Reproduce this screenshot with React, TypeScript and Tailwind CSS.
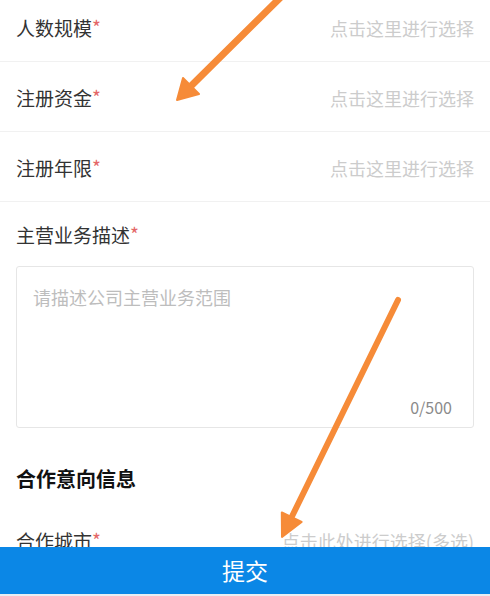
import React from "react";

const font = { fontFamily: '"Noto Sans CJK SC", "Noto Sans", sans-serif' };

function Label({ text }: { text: string }) {
  return (
    <div className="text-[19px] leading-[28px] text-[#333333]">
      <span>{text}</span>
      <span className="relative top-[-1px] text-[19px] text-[#e46767]">*</span>
    </div>
  );
}

function SelectRow({ label, placeholder }: { label: string; placeholder: string }) {
  return (
    <div className="flex h-[70px] items-center justify-between border-b border-[#f1f1f1] px-4 pt-[3px]">
      <Label text={label} />
      <div className="text-[18px] leading-[28px] text-[#cccccc]">{placeholder}</div>
    </div>
  );
}

export default function App() {
  return (
    <div className="relative h-[596px] w-[490px] overflow-hidden bg-white" style={font}>
      <div className="-mt-2 flex flex-col">
        <SelectRow label="人数规模" placeholder="点击这里进行选择" />
        <SelectRow label="注册资金" placeholder="点击这里进行选择" />
        <SelectRow label="注册年限" placeholder="点击这里进行选择" />

        <div className="flex flex-col px-4">
          <div className="mt-[19px]">
            <Label text="主营业务描述" />
          </div>
          <div className="mt-[17px] flex h-[162px] flex-col justify-between rounded-[3px] border border-[#e6e6e6] pb-[10px] pl-4 pr-[21px] pt-[18px]">
            <div className="text-[18px] leading-[24px] text-[#bdbdbd]">请描述公司主营业务范围</div>
            <div className="self-end text-[16px] leading-[20px] text-[#8a8a8a]">0/500</div>
          </div>
          <div className="mt-[37px] text-[20px] font-bold leading-[28px] text-[#111111]">合作意向信息</div>
        </div>

        <div className="mt-[12px]">
          <SelectRow label="合作城市" placeholder="点击此处进行选择(多选)" />
        </div>
      </div>

      <div className="absolute bottom-0 left-0 right-0 flex h-[49px] flex-col">
        <button className="flex h-[47px] w-full items-center justify-center bg-[#0b87e6] text-[23px] leading-none text-white">
          提交
        </button>
        <div className="h-[2px] bg-[#e9eef3]" />
      </div>

      <svg
        className="pointer-events-none absolute left-0 top-0"
        width="490"
        height="596"
        viewBox="0 0 490 596"
      >
        <line x1="284" y1="-6" x2="191" y2="86" stroke="#f68b38" strokeWidth="7" strokeLinecap="round" />
        <polygon points="177,100 183,78 199,94" fill="#f68b38" stroke="#f68b38" strokeWidth="2" strokeLinejoin="round" />
        <line x1="398" y1="300" x2="291.7" y2="517" stroke="#f68b38" strokeWidth="6" strokeLinecap="round" />
        <polygon points="282,537 281.8,512.4 301.6,522" fill="#f68b38" stroke="#f68b38" strokeWidth="2" strokeLinejoin="round" />
      </svg>
    </div>
  );
}
